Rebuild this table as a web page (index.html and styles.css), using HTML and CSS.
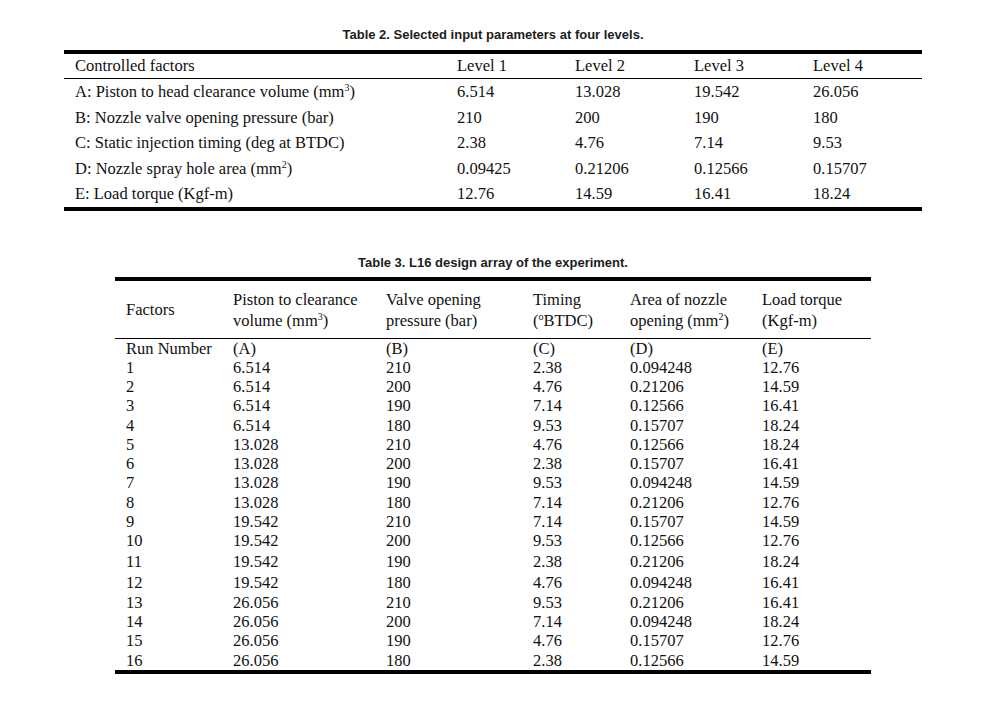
FILE: index.html
```html
<!DOCTYPE html>
<html>
<head>
<meta charset="utf-8">
<link rel="stylesheet" href="styles.css">
</head>
<body>
<div class="page">
  <p class="caption cap2">Table 2. Selected input parameters at four levels.</p>
  <table class="t2">
    <colgroup>
      <col class="c2-f"><col class="c2-1"><col class="c2-2"><col class="c2-3"><col class="c2-4">
    </colgroup>
    <thead>
      <tr><th>Controlled factors</th><th>Level 1</th><th>Level 2</th><th>Level 3</th><th>Level 4</th></tr>
    </thead>
    <tbody>
      <tr class="h26"><td>A: Piston to head clearance volume (mm<sup>3</sup>)</td><td>6.514</td><td>13.028</td><td>19.542</td><td>26.056</td></tr>
      <tr class="h25"><td>B: Nozzle valve opening pressure (bar)</td><td>210</td><td>200</td><td>190</td><td>180</td></tr>
      <tr class="h26"><td>C: Static injection timing (deg at BTDC)</td><td>2.38</td><td>4.76</td><td>7.14</td><td>9.53</td></tr>
      <tr class="h25"><td>D: Nozzle spray hole area (mm<sup>2</sup>)</td><td>0.09425</td><td>0.21206</td><td>0.12566</td><td>0.15707</td></tr>
      <tr class="h26"><td>E: Load torque (Kgf-m)</td><td>12.76</td><td>14.59</td><td>16.41</td><td>18.24</td></tr>
    </tbody>
  </table>

  <p class="caption cap3">Table 3. L16 design array of the experiment.</p>
  <table class="t3">
    <colgroup>
      <col class="c3-f"><col class="c3-a"><col class="c3-b"><col class="c3-c"><col class="c3-d"><col class="c3-e">
    </colgroup>
    <thead>
      <tr>
        <th>Factors</th>
        <th>Piston to clearance<br>volume (mm<sup>3</sup>)</th>
        <th>Valve opening<br>pressure (bar)</th>
        <th>Timing<br>(<sup>o</sup>BTDC)</th>
        <th>Area of nozzle<br>opening (mm<sup>2</sup>)</th>
        <th>Load torque<br>(Kgf-m)</th>
      </tr>
    </thead>
    <tbody>
      <tr><td>Run Number</td><td>(A)</td><td>(B)</td><td>(C)</td><td>(D)</td><td>(E)</td></tr>
      <tr><td>1</td><td>6.514</td><td>210</td><td>2.38</td><td>0.094248</td><td>12.76</td></tr>
      <tr><td>2</td><td>6.514</td><td>200</td><td>4.76</td><td>0.21206</td><td>14.59</td></tr>
      <tr class="r20"><td>3</td><td>6.514</td><td>190</td><td>7.14</td><td>0.12566</td><td>16.41</td></tr>
      <tr><td>4</td><td>6.514</td><td>180</td><td>9.53</td><td>0.15707</td><td>18.24</td></tr>
      <tr><td>5</td><td>13.028</td><td>210</td><td>4.76</td><td>0.12566</td><td>18.24</td></tr>
      <tr><td>6</td><td>13.028</td><td>200</td><td>2.38</td><td>0.15707</td><td>16.41</td></tr>
      <tr class="r20"><td>7</td><td>13.028</td><td>190</td><td>9.53</td><td>0.094248</td><td>14.59</td></tr>
      <tr><td>8</td><td>13.028</td><td>180</td><td>7.14</td><td>0.21206</td><td>12.76</td></tr>
      <tr><td>9</td><td>19.542</td><td>210</td><td>7.14</td><td>0.15707</td><td>14.59</td></tr>
      <tr class="r20"><td>10</td><td>19.542</td><td>200</td><td>9.53</td><td>0.12566</td><td>12.76</td></tr>
      <tr class="r22"><td>11</td><td>19.542</td><td>190</td><td>2.38</td><td>0.21206</td><td>18.24</td></tr>
      <tr class="r20"><td>12</td><td>19.542</td><td>180</td><td>4.76</td><td>0.094248</td><td>16.41</td></tr>
      <tr><td>13</td><td>26.056</td><td>210</td><td>9.53</td><td>0.21206</td><td>16.41</td></tr>
      <tr><td>14</td><td>26.056</td><td>200</td><td>7.14</td><td>0.094248</td><td>18.24</td></tr>
      <tr class="r20"><td>15</td><td>26.056</td><td>190</td><td>4.76</td><td>0.15707</td><td>12.76</td></tr>
      <tr><td>16</td><td>26.056</td><td>180</td><td>2.38</td><td>0.12566</td><td>14.59</td></tr>
    </tbody>
  </table>
</div>
</body>
</html>
```

FILE: styles.css
```css
html, body {
  margin: 0;
  padding: 0;
  background: #ffffff;
}

.page {
  width: 986px;
  padding-top: 27px;
}

.caption {
  margin: 0;
  text-align: center;
  font-family: "Liberation Sans", Arial, sans-serif;
  font-weight: bold;
  font-size: 13px;
  line-height: 16px;
  color: #1c1c1c;
}

.cap2 { margin-bottom: 7px; }
.cap3 { margin-top: 44px; margin-bottom: 6px; }

table {
  border-collapse: collapse;
  table-layout: fixed;
  margin: 0 auto;
  font-family: "Liberation Serif", "Times New Roman", serif;
  font-size: 16.5px;
  color: #111111;
}

th, td {
  padding: 0;
  text-align: left;
  font-weight: normal;
  white-space: nowrap;
}

th:first-child, td:first-child {
  padding-left: 11px;
}

sup {
  font-size: 10px;
  line-height: 0;
  vertical-align: 6px;
}

/* Table 2 */
.t2 {
  width: 858px;
  border-top: 4px solid #000;
  border-bottom: 4px solid #000;
}
.c2-f { width: 393px; }
.c2-1 { width: 118px; }
.c2-2 { width: 119px; }
.c2-3 { width: 119px; }
.c2-4 { width: 109px; }

.t2 thead th {
  height: 24px;
  line-height: 20px;
  border-bottom: 1px solid #000;
}
.t2 .h26 td { height: 26px; line-height: 20px; }
.t2 .h25 td { height: 25px; line-height: 20px; }

/* Table 3 */
.t3 {
  width: 756px;
  border-top: 4px solid #000;
  border-bottom: 4px solid #000;
}
.c3-f { width: 118px; }
.c3-a { width: 153px; }
.c3-b { width: 147px; }
.c3-c { width: 97px; }
.c3-d { width: 132px; }
.c3-e { width: 109px; }

.t3 thead th {
  height: 57px;
  line-height: 21px;
  vertical-align: middle;
  border-bottom: 1px solid #000;
}
.t3 tbody td {
  height: 19px;
  line-height: 18px;
}
.t3 tbody .r20 td { height: 20px; }
.t3 tbody .r22 td { height: 22px; }
```
